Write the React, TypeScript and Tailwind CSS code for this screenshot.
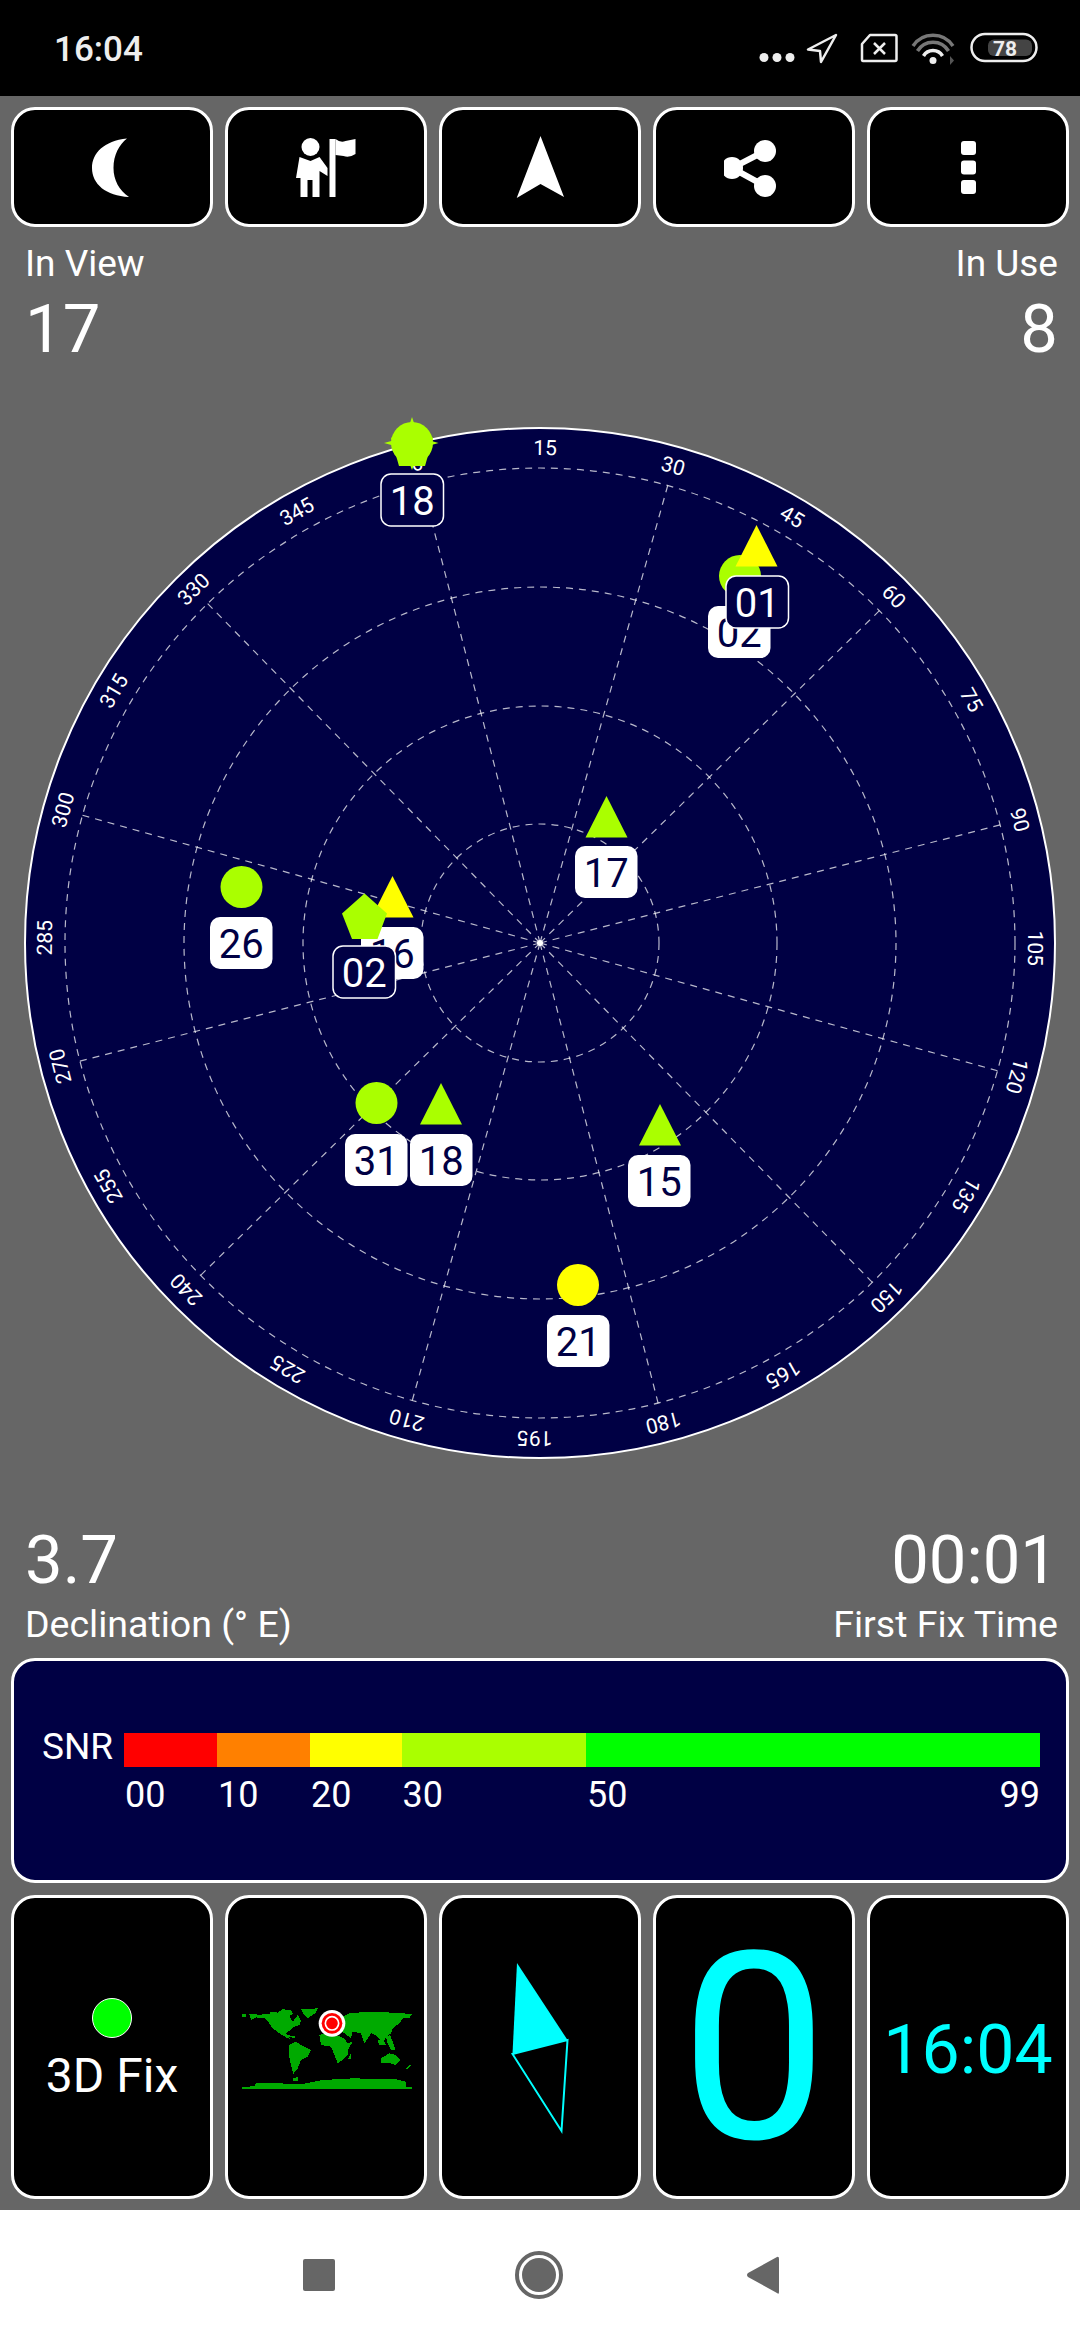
import React from "react";

const NAVY = "#000044";
const LIME = "#aaff00";
const YEL = "#ffff00";
const CX = 540;
const CY = 943;
const ROT = -14.4;

const pt = (deg: number, r: number) => {
  const a = ((deg + ROT) * Math.PI) / 180;
  return { x: CX + r * Math.sin(a), y: CY - r * Math.cos(a) };
};

const degs = Array.from({ length: 24 }, (_, i) => i * 15);

type Mark =
  | { kind: "circle"; x: number; y: number; c: string }
  | { kind: "tri"; x: number; y: number; c: string }
  | { kind: "pent" }
  | { kind: "star" };

type Sat = { id: string; lx: number; ly: number; dark?: boolean; mark: Mark };

const sats: Sat[] = [
  { id: "26", lx: 210, ly: 917, mark: { kind: "circle", x: 241.5, y: 887, c: LIME } },
  { id: "02", lx: 708, ly: 606, mark: { kind: "circle", x: 740, y: 576, c: LIME } },
  { id: "01", lx: 726, ly: 576, dark: true, mark: { kind: "tri", x: 756.5, y: 525, c: YEL } },
  { id: "17", lx: 575, ly: 846, mark: { kind: "tri", x: 606.5, y: 796, c: LIME } },
  { id: "16", lx: 361, ly: 927, mark: { kind: "tri", x: 392.5, y: 876, c: YEL } },
  { id: "02", lx: 333, ly: 946, dark: true, mark: { kind: "pent" } },
  { id: "31", lx: 345, ly: 1134, mark: { kind: "circle", x: 376.5, y: 1103, c: LIME } },
  { id: "18", lx: 410, ly: 1134, mark: { kind: "tri", x: 441, y: 1083, c: LIME } },
  { id: "15", lx: 628, ly: 1155, mark: { kind: "tri", x: 660, y: 1104, c: LIME } },
  { id: "21", lx: 547, ly: 1315, mark: { kind: "circle", x: 578, y: 1285, c: YEL } },
  { id: "18", lx: 381, ly: 474, dark: true, mark: { kind: "star" } },
];

function Marker({ m }: { m: Mark }) {
  if (m.kind === "circle") return <circle cx={m.x} cy={m.y} r={21} fill={m.c} />;
  if (m.kind === "tri")
    return <polygon points={`${m.x},${m.y} ${m.x + 21},${m.y + 41.5} ${m.x - 21},${m.y + 41.5}`} fill={m.c} />;
  if (m.kind === "pent")
    return <polygon points="364.5,893.5 387,913.5 377.5,939 352,939 342,913.5" fill={LIME} />;
  return (
    <g fill={LIME}>
      <circle cx={412} cy={443} r={21} />
      <polygon points="412,421 433,438 425,466 399,466 391,438" />
      <polygon points="412,417 415,426 409,426" />
      <polygon points="438.5,443 428,446 428,440" />
      <polygon points="384,443 395,440 395,446" />
      <polygon points="412,470 409,462 415,462" />
    </g>
  );
}

function Radar() {
  return (
    <svg viewBox="0 400 1080 1100" className="mt-[33px] h-[1100px] w-[1080px] shrink-0 block">
      <circle cx={CX} cy={CY} r={515} fill={NAVY} stroke="#ffffff" strokeWidth={2} />
      <g fill="none" stroke="#ffffff" strokeOpacity={0.72} strokeWidth={1.2} strokeDasharray="7 6">
        {[119, 237, 356, 475].map((r) => (
          <circle key={r} cx={CX} cy={CY} r={r} />
        ))}
        {degs
          .filter((d) => d % 30 === 0)
          .map((d) => {
            const e = pt(d, 475);
            return <line key={d} x1={CX} y1={CY} x2={e.x} y2={e.y} />;
          })}
      </g>
      <circle cx={CX} cy={CY} r={3} fill="#ffffff" />
      {degs.map((d) => {
        const p = pt(d, 495);
        return (
          <text
            key={d}
            x={p.x}
            y={p.y}
            fill="#ffffff"
            fontSize={21}
            textAnchor="middle"
            dominantBaseline="central"
            transform={`rotate(${d + ROT} ${p.x} ${p.y})`}
          >
            {d}
          </text>
        );
      })}
      {sats.map((s, i) => (
        <g key={i}>
          <Marker m={s.mark} />
          <rect
            x={s.lx}
            y={s.ly}
            width={62.5}
            height={52}
            rx={10}
            fill={s.dark ? NAVY : "#ffffff"}
            stroke={s.dark ? "#ffffff" : "none"}
            strokeWidth={1.5}
          />
          <text
            x={s.lx + 31.2}
            y={s.ly + 41}
            fill={s.dark ? "#ffffff" : NAVY}
            fontSize={40}
            textAnchor="middle"
          >
            {s.id}
          </text>
        </g>
      ))}
    </svg>
  );
}

function WorldMap() {
  return (
    <svg viewBox="0 0 540 300" className="block h-[100px] w-[180px]">
      <g fill="#00aa00" shapeRendering="crispEdges">
        <polygon points="18,42 30,42 30,50 18,50" />
        <polygon points="40,42 70,44 100,42 105,35 125,38 140,28 165,30 172,42 160,48 170,65 185,45 195,62 190,75 175,80 160,92 150,100 165,118 150,112 130,100 110,85 100,70 85,55 60,52 45,60" />
        <polygon points="195,28 245,25 240,38 215,55 205,45" />
        <polygon points="160,135 180,125 200,138 225,150 215,170 195,180 185,205 172,222 165,195 158,160" />
        <polygon points="150,105 175,108 178,113 160,112" />
        <polygon points="250,105 270,98 300,105 325,115 335,130 350,125 335,150 335,165 320,180 305,190 295,165 285,140 255,135" />
        <polygon points="255,60 320,50 340,40 400,35 470,38 528,42 520,55 500,55 490,70 470,85 465,100 450,110 440,130 420,105 405,100 385,130 375,100 350,95 345,115 325,100 310,90 270,92 255,85" />
        <polygon points="425,120 445,125 450,135 430,135" />
        <polygon points="450,110 462,105 470,125 478,150 465,150 455,130" />
        <polygon points="435,175 460,160 480,165 492,180 480,195 455,188 435,190" />
        <polygon points="335,178 345,160 344,178" />
        <polygon points="510,205 522,195 525,198 515,208" />
        <polygon points="18,262 55,258 60,248 120,250 200,252 260,240 350,235 480,238 510,245 510,262 528,262 528,268 18,268" />
        <polygon points="170,235 188,230 185,242 172,244" />
      </g>
      <circle cx={288} cy={70} r={40} fill="#ffffff" />
      <circle cx={288} cy={70} r={31} fill="#ff0000" />
      <circle cx={288} cy={70} r={20} fill="none" stroke="#ffffff" strokeWidth={5} />
      <circle cx={288} cy={70} r={15} fill="#ff0000" />
    </svg>
  );
}

function Btn({ children }: { children: React.ReactNode }) {
  return (
    <div className="flex h-[120px] items-center justify-center rounded-[24px] border-[3px] border-white bg-black">
      {children}
    </div>
  );
}

function Tile({ children }: { children: React.ReactNode }) {
  return (
    <div className="flex h-[304px] flex-col items-center justify-center rounded-[24px] border-[3px] border-white bg-black">
      {children}
    </div>
  );
}

const segs = [
  { w: "w-[93px]", c: "bg-[#ff0000]", t: "00" },
  { w: "w-[93px]", c: "bg-[#ff8000]", t: "10" },
  { w: "w-[91.5px]", c: "bg-[#ffff00]", t: "20" },
  { w: "w-[184.5px]", c: "bg-[#aaff00]", t: "30" },
  { w: "w-[454px]", c: "bg-[#00ff00]", t: "50" },
];

export default function App() {
  return (
    <div className="flex h-[2340px] w-[1080px] flex-col overflow-hidden bg-[#666666] font-['Roboto',sans-serif] text-white">
      {/* status bar */}
      <div className="flex h-[96px] shrink-0 items-start justify-between bg-black">
        <span className="ml-[54px] mt-[30px] text-[35px] font-medium leading-[40px] text-[#eeeeee]">16:04</span>
        <svg viewBox="750 25 300 50" className="mr-[30px] mt-[25px] h-[50px] w-[300px]">
          <g fill="#eeeeee">
            <circle cx={764} cy={57.5} r={4.5} />
            <circle cx={777} cy={57.5} r={4.5} />
            <circle cx={790} cy={57.5} r={4.5} />
          </g>
          <polygon points="836,35 808,49.5 820,51 821,62" fill="none" stroke="#eeeeee" strokeWidth={2.5} strokeLinejoin="round" />
          <path d="M870 35 H895 Q896.5 35 896.5 36.5 V59.5 Q896.5 61 895 61 H863 Q862 61 862 59.5 V44 Z" fill="none" stroke="#eeeeee" strokeWidth={2.5} strokeLinejoin="round" />
          <path d="M874 43 L885 54 M885 43 L874 54" stroke="#eeeeee" strokeWidth={2.5} />
          <g fill="none" strokeWidth={3.5}>
            <path d="M913 46 A24 24 0 0 1 953 46" stroke="#777777" />
            <path d="M917.5 51 A18 18 0 0 1 948.5 51" stroke="#777777" />
            <path d="M923.5 56 A11 11 0 0 1 942.5 56" stroke="#eeeeee" />
          </g>
          <circle cx={933} cy={60.5} r={3.5} fill="#eeeeee" />
          <polygon points="950,56 954,60.5 950,65" fill="#555555" />
          <rect x={971.5} y={34} width={65} height={27} rx={13.5} fill="none" stroke="#eeeeee" strokeWidth={2.5} />
          <rect x={988} y={39.5} width={44} height={16.5} rx={6} fill="#444444" />
          <text x={1005} y={56} fill="#eeeeee" fontSize={21} fontWeight={700} textAnchor="middle">
            78
          </text>
        </svg>
      </div>

      {/* toolbar */}
      <div className="mx-[11px] mt-[11px] grid shrink-0 grid-cols-5 gap-3">
        <Btn>
          <svg viewBox="82 127 60 80" className="h-[80px] w-[60px]">
            <path d="M127 138.5 C104 141 92 153 92 168 C92 184 106 196 129 197 C119 190 113.5 180 113.5 168 C113.5 155 119 145 127 138.5Z" fill="#ffffff" />
          </svg>
        </Btn>
        <Btn>
          <svg viewBox="296.5 132 60 70" className="h-[70px] w-[60px]">
            <g fill="#ffffff">
              <circle cx={311} cy={147} r={9} />
              <path d="M300 157 L311 161 L320 157 L328 168 L328 176 L320 171 L320 197 L313 197 L313 180 L308 180 L308 197 L301 197 L301 178 L296.5 178 Z" />
              <rect x={330} y={139} width={6} height={58} />
              <path d="M336 139 Q341 143 346 141 L356 139 V154 Q350 158 344 156 L336 155 Z" />
            </g>
          </svg>
        </Btn>
        <Btn>
          <svg viewBox="510 130 60 74" className="h-[74px] w-[60px]">
            <polygon points="540.5,136 564,197 540.5,184 516.7,198" fill="#ffffff" />
          </svg>
        </Btn>
        <Btn>
          <svg viewBox="724 132 60 70" className="h-[70px] w-[60px]">
            <path d="M765 151 L732 168 L765 186" fill="none" stroke="#ffffff" strokeWidth={6} />
            <circle cx={765} cy={151} r={11} fill="#ffffff" />
            <circle cx={732} cy={168} r={11} fill="#ffffff" />
            <circle cx={765} cy={186} r={11} fill="#ffffff" />
          </svg>
        </Btn>
        <Btn>
          <svg viewBox="958 136 20 62" className="h-[62px] w-[20px]">
            <g fill="#ffffff">
              <rect x={961} y={141} width={15} height={14} rx={3} />
              <rect x={961} y={160.5} width={15} height={14} rx={3} />
              <rect x={961} y={180} width={15} height={14} rx={3} />
            </g>
          </svg>
        </Btn>
      </div>

      {/* top stats */}
      <div className="mt-[16px] flex shrink-0 justify-between pl-[25px] pr-[22px] text-[37px] leading-[42px]">
        <span>In View</span>
        <span>In Use</span>
      </div>
      <div className="mt-[6px] flex shrink-0 justify-between pl-[25px] pr-[22px] text-[67px] leading-[76px]">
        <span>17</span>
        <span>8</span>
      </div>

      <Radar />

      {/* lower stats */}
      <div className="mt-[22px] flex shrink-0 justify-between pl-[25px] pr-[22px] text-[67px] leading-[76px]">
        <span>3.7</span>
        <span>00:01</span>
      </div>
      <div className="mt-[5px] flex shrink-0 justify-between pl-[25px] pr-[22px] text-[37.5px] leading-[42px]">
        <span>Declination (° E)</span>
        <span>First Fix Time</span>
      </div>

      {/* SNR */}
      <div className="mx-[11px] mt-[13px] flex h-[225px] shrink-0 items-start rounded-[24px] border-[3px] border-white bg-[#000044] pl-[28px] pt-[65px]">
        <span className="w-[82px] text-[37px] leading-[42px]">SNR</span>
        <div className="mt-[7px] flex">
          {segs.map((s) => (
            <div key={s.t} className={s.w}>
              <div className={`h-[34px] ${s.c}`} />
              <div className="mt-[7px] flex justify-between pl-[1px] text-[36px] leading-[42px]">
                <span>{s.t}</span>
                {s.t === "50" && <span>99</span>}
              </div>
            </div>
          ))}
        </div>
      </div>

      {/* tiles */}
      <div className="mx-[11px] mt-[12px] grid shrink-0 grid-cols-5 gap-3">
        <Tile>
          <div className="mt-[6px] h-[40px] w-[40px] rounded-full border border-white bg-[#00ff00]" />
          <span className="mt-[11px] text-[48px] leading-[54px]">3D Fix</span>
        </Tile>
        <Tile>
          <div className="mt-[6px]">
            <WorldMap />
          </div>
        </Tile>
        <Tile>
          <svg viewBox="489.5 1947 100 200" className="h-[200px] w-[100px]">
            <polygon points="516.5,1963 567,2040 512,2054" fill="#00ffff" />
            <polygon points="512,2054 567,2040 561,2131" fill="none" stroke="#00ffff" strokeWidth={2} />
          </svg>
        </Tile>
        <Tile>
          <span className="pt-[4px] text-[262px] leading-[280px] text-[#00ffff]">0</span>
        </Tile>
        <Tile>
          <span className="pt-[6px] text-[68px] leading-[76px] text-[#00ffff]">16:04</span>
        </Tile>
      </div>

      {/* nav bar */}
      <div className="mt-auto flex h-[130px] shrink-0 items-center bg-white">
        <svg viewBox="0 2210 1080 130" className="block h-[130px] w-[1080px]">
          <rect x={303} y={2259} width={32} height={32} rx={2} fill="#666666" />
          <circle cx={539} cy={2275} r={22} fill="none" stroke="#666666" strokeWidth={4} />
          <circle cx={539} cy={2275} r={17} fill="#666666" />
          <path d="M777 2257 Q779 2256 779 2259 V2292 Q779 2295 777 2293 L748 2277 Q746 2275 748 2273 Z" fill="#666666" />
        </svg>
      </div>
    </div>
  );
}
